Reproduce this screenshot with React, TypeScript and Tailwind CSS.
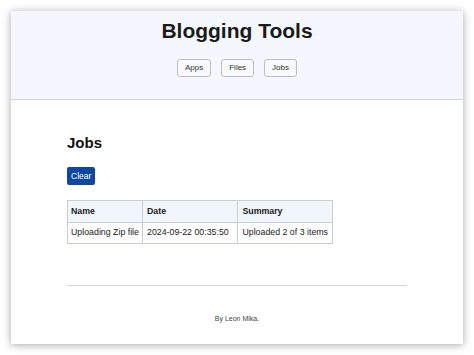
const rows = [
  { name: 'Uploading Zip file', date: '2024-09-22 00:35:50', summary: 'Uploaded 2 of 3 items' },
];

const NavButton = ({ label }: { label: string }) => (
  <button className="h-[18px] px-[7px] text-[8px] text-[#333] bg-[#f8f9fb] border border-[#b9bec7] rounded-[3px] leading-none">
    {label}
  </button>
);

export default function App() {
  return (
    <div className="w-[474px] h-[355px] bg-white p-[11px] font-['Liberation_Sans',Arial,sans-serif]">
      <div className="h-[333px] bg-white shadow-[0_1px_8px_rgba(0,0,0,0.35)] flex flex-col">
        <header className="h-[89px] bg-[#f4f7fd] border-b border-[#cfd3da] flex flex-col items-center pt-[7px]">
          <h1 className="text-[21px] leading-[25px] font-bold text-[#1a1a1a]">Blogging Tools</h1>
          <nav className="flex gap-[10px] mt-[16px]">
            <NavButton label="Apps" />
            <NavButton label="Files" />
            <NavButton label="Jobs" />
          </nav>
        </header>
        <main className="mx-[56px] pt-[34px] flex-1 flex flex-col">
          <h2 className="text-[15px] leading-[18px] font-bold text-[#111]">Jobs</h2>
          <div className="mt-[15px] flex">
            <button className="h-[18px] px-[4px] bg-[#0d47a1] text-white text-[8.5px] rounded-[2px] leading-none">
              Clear
            </button>
          </div>
          <table className="mt-[15px] border-collapse text-[8.8px] text-[#222] w-[266px]">
            <thead>
              <tr className="bg-[#f1f5fc]">
                <th className="w-[75px] h-[22px] border border-[#c9ced6] text-left font-bold px-[3px]">Name</th>
                <th className="w-[96px] border border-[#c9ced6] text-left font-bold px-[4px]">Date</th>
                <th className="border border-[#c9ced6] text-left font-bold px-[4px]">Summary</th>
              </tr>
            </thead>
            <tbody>
              {rows.map((r) => (
                <tr key={r.name}>
                  <td className="h-[21px] border border-[#c9ced6] px-[3px] whitespace-nowrap">{r.name}</td>
                  <td className="border border-[#c9ced6] px-[4px] whitespace-nowrap">{r.date}</td>
                  <td className="border border-[#c9ced6] px-[4px] whitespace-nowrap">{r.summary}</td>
                </tr>
              ))}
            </tbody>
          </table>
          <hr className="mt-[41px] border-t-[1px] border-[#d6d6d6]" />
          <footer className="mt-[28px] text-center text-[7px] leading-[9px] text-[#444]">By Leon Mika.</footer>
        </main>
      </div>
    </div>
  );
}
